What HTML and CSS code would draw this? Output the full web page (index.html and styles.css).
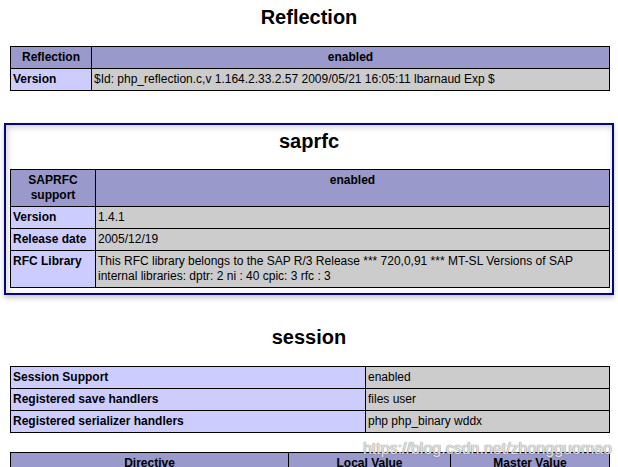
FILE: index.html
```
<!DOCTYPE html>
<html>
<head>
<meta charset="utf-8">
<link rel="stylesheet" href="styles.css">
</head>
<body>
<div class="page">
  <h2 class="title first">Reflection</h2>
  <table class="info refl">
    <tr><th class="h c-refl">Reflection</th><th class="h">enabled</th></tr>
    <tr><td class="e">Version </td><td class="v">$Id: php_reflection.c,v 1.164.2.33.2.57 2009/05/21 16:05:11 lbarnaud Exp $ </td></tr>
  </table>

  <div class="highlight">
    <h2 class="title boxed">saprfc</h2>
    <table class="info">
      <tr><th class="h c-sap">SAPRFC<br>support</th><th class="h">enabled</th></tr>
      <tr><td class="e">Version </td><td class="v">1.4.1 </td></tr>
      <tr><td class="e">Release date </td><td class="v">2005/12/19 </td></tr>
      <tr><td class="e">RFC Library </td><td class="v">This RFC library belongs to the SAP R/3 Release *** 720,0,91 *** MT-SL Versions of SAP internal libraries: dptr: 2 ni : 40 cpic: 3 rfc : 3 </td></tr>
    </table>
  </div>

  <h2 class="title sess">session</h2>
  <table class="info sess-table">
    <tr><td class="e c-sess">Session Support </td><td class="v">enabled </td></tr>
    <tr><td class="e">Registered save handlers </td><td class="v">files user </td></tr>
    <tr><td class="e">Registered serializer handlers </td><td class="v">php php_binary wddx </td></tr>
  </table>

  <div class="last-wrap">
    <table class="info dir">
      <tr><th class="h c-dir">Directive</th><th class="h c-local">Local Value</th><th class="h">Master Value</th></tr>
    </table>
    <span class="watermark">https://blog.csdn.net/zhongguomao</span>
  </div>
</div>
</body>
</html>
```

FILE: styles.css
```
html, body {
  margin: 0;
  padding: 0;
  background: #ffffff;
  color: #000000;
  font-family: "Liberation Sans", Arial, sans-serif;
}

.page {
  padding-top: 6px;
  overflow: hidden;
  height: 467px;
  box-sizing: border-box;
}

.title {
  margin: 0;
  font-size: 20px;
  line-height: 23px;
  font-weight: bold;
  text-align: center;
}

.info {
  border-collapse: collapse;
  width: 600px;
  margin: 13px auto 0;
  position: relative;
  left: 1px;
}

.info td, .info th {
  border: 1px solid #000000;
  font-size: 12px;
  line-height: 15px;
  padding: 3px 2px;
  vertical-align: baseline;
  text-align: left;
}

.info th {
  text-align: center;
}

.h { background-color: #9999cc; font-weight: bold; }
.e { background-color: #ccccff; font-weight: bold; }
.v { background-color: #cccccc; }

.c-refl { width: 76px; }
.c-sap { width: 80px; }
.c-sess { width: 350px; }
.c-dir { width: 273px; }
.c-local { width: 157px; }

.refl {
  margin-top: 17px;
}

.highlight {
  margin: 32px 4px 0;
  border: 2px solid #06067f;
  padding: 5px 0 5px;
  box-shadow: 0 3px 5px rgba(0, 0, 0, 0.22), inset 0 3px 6px rgba(0, 0, 0, 0.12), inset 3px 0 6px rgba(0, 0, 0, 0.08);
}

.highlight .info {
  margin-top: 16px;
}

.sess {
  margin-top: 31px;
}

.sess-table {
  margin-top: 17px;
}

.last-wrap {
  position: relative;
}

.dir {
  margin-top: 19px;
}

.watermark {
  position: absolute;
  right: 6px;
  top: -12px;
  font-size: 16px;
  line-height: 18px;
  color: rgba(255, 255, 255, 0.8);
  text-shadow: 0 0 1px rgba(110, 110, 110, 0.8), 0 0 1px rgba(110, 110, 110, 0.8);
  font-family: "Liberation Sans", Arial, sans-serif;
}
```
